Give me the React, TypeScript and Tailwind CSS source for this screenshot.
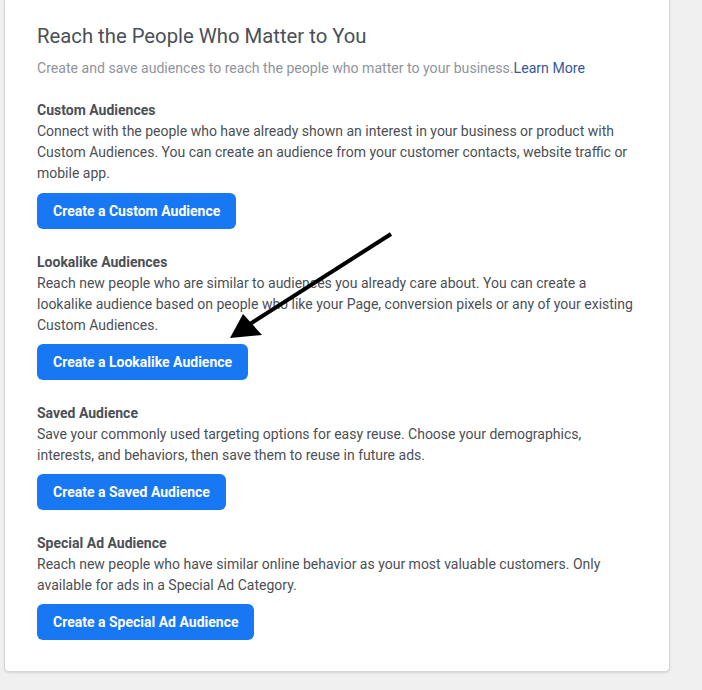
import React from "react";

const sections = [
  {
    title: "Custom Audiences",
    body: "Connect with the people who have already shown an interest in your business or product with Custom Audiences. You can create an audience from your customer contacts, website traffic or mobile app.",
    cta: "Create a Custom Audience",
  },
  {
    title: "Lookalike Audiences",
    body: "Reach new people who are similar to audiences you already care about. You can create a lookalike audience based on people who like your Page, conversion pixels or any of your existing Custom Audiences.",
    cta: "Create a Lookalike Audience",
  },
  {
    title: "Saved Audience",
    body: "Save your commonly used targeting options for easy reuse. Choose your demographics, interests, and behaviors, then save them to reuse in future ads.",
    cta: "Create a Saved Audience",
  },
  {
    title: "Special Ad Audience",
    body: "Reach new people who have similar online behavior as your most valuable customers. Only available for ads in a Special Ad Category.",
    cta: "Create a Special Ad Audience",
  },
];

export default function App() {
  return (
    <div className="relative w-[702px] min-h-[690px] bg-[#f0f0f0] pl-1 font-['Roboto',sans-serif]">
      <div className="w-[666px] bg-white border-x border-b border-[#d6d7da] rounded-b-[5px] shadow-[0_1px_2px_rgba(0,0,0,0.12)] px-[32px] pt-6 pb-[31px]">
        <h2 className="text-[20.3px] leading-6 font-normal text-[#4b4f56]">
          Reach the People Who Matter to You
        </h2>
        <p className="mt-[10px] text-[14.1px] leading-[21px] text-[#90949c]">
          Create and save audiences to reach the people who matter to your business.
          <a href="#" className="text-[#365899]">Learn More</a>
        </p>

        <div className="mt-[21px] flex flex-col gap-[23px]">
          {sections.map((s, i) => (
            <div key={s.title} className="flex flex-col items-start">
              <div className="text-[14px] leading-[21px] font-bold text-[#4b4f56]">{s.title}</div>
              <p className="text-[14px] leading-[21px] text-[#4b4f56]">{s.body}</p>
              <button
                className={`${i === 0 ? "mt-[9px]" : "mt-[8px]"} h-9 px-4 rounded-[6px] bg-[#1877f2] text-white text-[14px] font-bold`}
              >
                {s.cta}
              </button>
            </div>
          ))}
        </div>
      </div>

      {/* annotation arrow pointing at the lookalike button */}
      <svg className="absolute left-0 top-0 pointer-events-none" width="702" height="690">
        <line x1="391" y1="234" x2="250" y2="324" stroke="#000" strokeWidth="4" />
        <polygon points="230,338 243,314 262,335" fill="#000" />
      </svg>
    </div>
  );
}
